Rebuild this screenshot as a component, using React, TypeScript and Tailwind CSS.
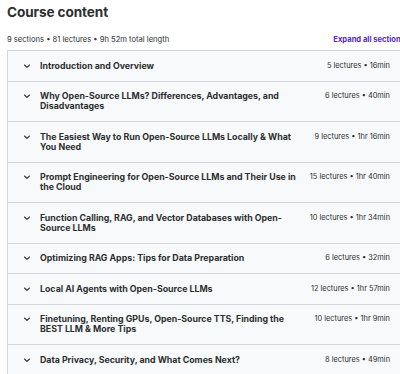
import React from "react";

const sections: { title: string; meta: string }[] = [
  { title: "Introduction and Overview", meta: "5 lectures • 16min" },
  { title: "Why Open-Source LLMs? Differences, Advantages, and Disadvantages", meta: "6 lectures • 40min" },
  { title: "The Easiest Way to Run Open-Source LLMs Locally & What You Need", meta: "9 lectures • 1hr 16min" },
  { title: "Prompt Engineering for Open-Source LLMs and Their Use in the Cloud", meta: "15 lectures • 1hr 40min" },
  { title: "Function Calling, RAG, and Vector Databases with Open-Source LLMs", meta: "10 lectures • 1hr 34min" },
  { title: "Optimizing RAG Apps: Tips for Data Preparation", meta: "6 lectures • 32min" },
  { title: "Local AI Agents with Open-Source LLMs", meta: "12 lectures • 1hr 57min" },
  { title: "Finetuning, Renting GPUs, Open-Source TTS, Finding the BEST LLM & More Tips", meta: "10 lectures • 1hr 9min" },
  { title: "Data Privacy, Security, and What Comes Next?", meta: "8 lectures • 49min" },
];

function Chevron() {
  return (
    <svg width="8" height="10" viewBox="0 0 8 10" className="shrink-0">
      <path d="M1.5 4 L4 6.3 L6.5 4" fill="none" stroke="#2d2f31" strokeWidth="1.1" strokeLinecap="round" strokeLinejoin="round" />
    </svg>
  );
}

export default function App() {
  return (
    <div
      className="w-[400px] h-[374px] overflow-hidden bg-white text-[#2d2f31]"
      style={{ fontFamily: "Inter, 'Noto Sans', sans-serif" }}
    >
      <div className="ml-[7px] w-[398px]">
        <h2 className="text-[13.6px] font-bold leading-[18px] pt-[3px] tracking-[-0.1px]">Course content</h2>
        <div className="flex justify-between items-center mt-[11px] h-[16px]">
          <span className="text-[7.6px]">9 sections • 81 lectures • 9h 52m total length</span>
          <span className="text-[7.6px] font-bold text-[#5624d0]">Expand all sections</span>
        </div>
        <div className="mt-[2px] border border-[#d1d7dc]">
          {sections.map((s, i) => (
            <div
              key={i}
              className={`flex items-start bg-[#f7f9fa] pl-[15px] pr-[14px] py-[9.75px] ${i > 0 ? "border-t border-[#d1d7dc]" : ""}`}
            >
              <Chevron />
              <div className="flex-1 ml-[9px] text-[8.8px] font-bold leading-[10px]">{s.title}</div>
              <div className="ml-[12px] text-[7.4px] leading-[10px] whitespace-nowrap">{s.meta}</div>
            </div>
          ))}
        </div>
      </div>
    </div>
  );
}
